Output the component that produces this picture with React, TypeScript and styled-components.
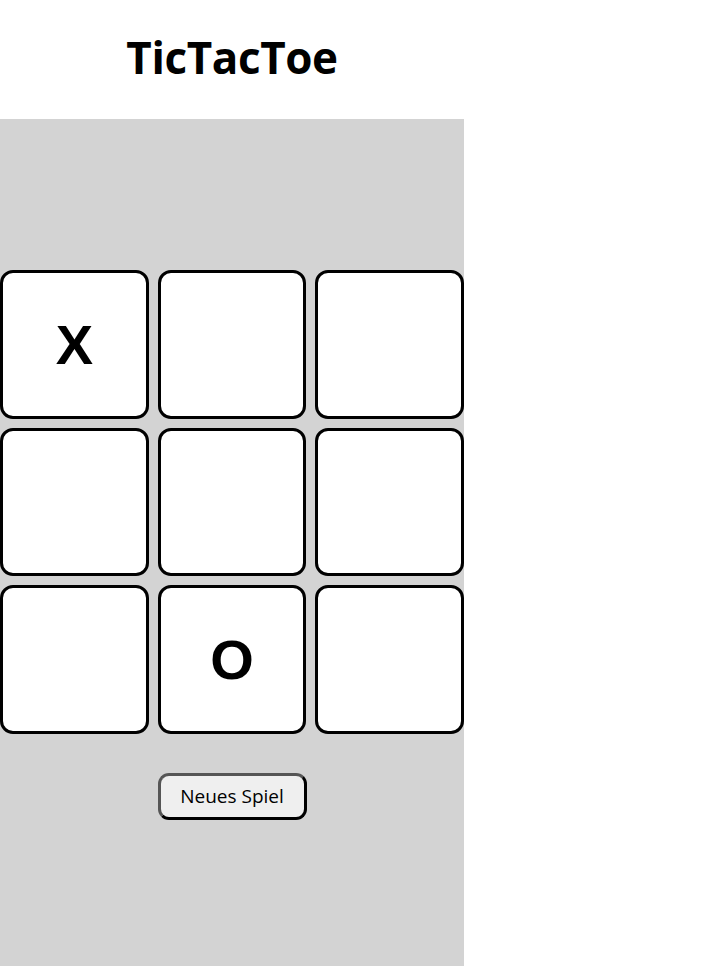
import styled, { createGlobalStyle } from "styled-components";

const GlobalStyle = createGlobalStyle`
  body {
    margin: 0;
    font-family: "Open Sans", "Noto Sans", sans-serif;
    background: #ffffff;
  }
`;

const StyledPage = styled.div`
  display: flex;
  flex-direction: column;
  width: 464px;
`;

const StyledTitle = styled.h1`
  margin: 0;
  height: 119px;
  padding-bottom: 6px;
  box-sizing: border-box;
  display: flex;
  align-items: center;
  justify-content: center;
  font-size: 44px;
  font-weight: 700;
  letter-spacing: -0.4px;
  color: #000;
`;

const StyledBoard = styled.main`
  display: flex;
  flex-direction: column;
  align-items: center;
  height: 847px;
  padding-top: 151px;
  box-sizing: border-box;
  background-color: #d3d3d3;
`;

const StyledGrid = styled.div`
  display: grid;
  grid-template-columns: repeat(3, 148.5px);
  grid-auto-rows: 148.5px;
  gap: 9px;
`;

const StyledCell = styled.button`
  box-sizing: border-box;
  border: 3px solid #000;
  border-radius: 13px;
  background: #fff;
  padding: 0;
  font-family: "Liberation Sans", Arial, sans-serif;
  font-size: 56px;
  font-weight: 700;
  color: #000;
  cursor: pointer;
`;

const StyledResetButton = styled.button`
  margin-top: 39px;
  width: 149px;
  height: 47px;
  box-sizing: border-box;
  border: 3px outset #555;
  border-right-color: #000;
  border-bottom-color: #000;
  border-radius: 11px;
  background: #efefef;
  font-family: "Open Sans", "Noto Sans", sans-serif;
  font-size: 19px;
  color: #000;
  cursor: pointer;
`;

const board = ["X", "", "", "", "", "", "", "O", ""];

const App = () => {
  return (
    <StyledPage>
      <GlobalStyle />
      <StyledTitle>TicTacToe</StyledTitle>
      <StyledBoard>
        <StyledGrid>
          {board.map((value, index) => (
            <StyledCell key={index}>{value}</StyledCell>
          ))}
        </StyledGrid>
        <StyledResetButton>Neues Spiel</StyledResetButton>
      </StyledBoard>
    </StyledPage>
  );
};

export default App;
